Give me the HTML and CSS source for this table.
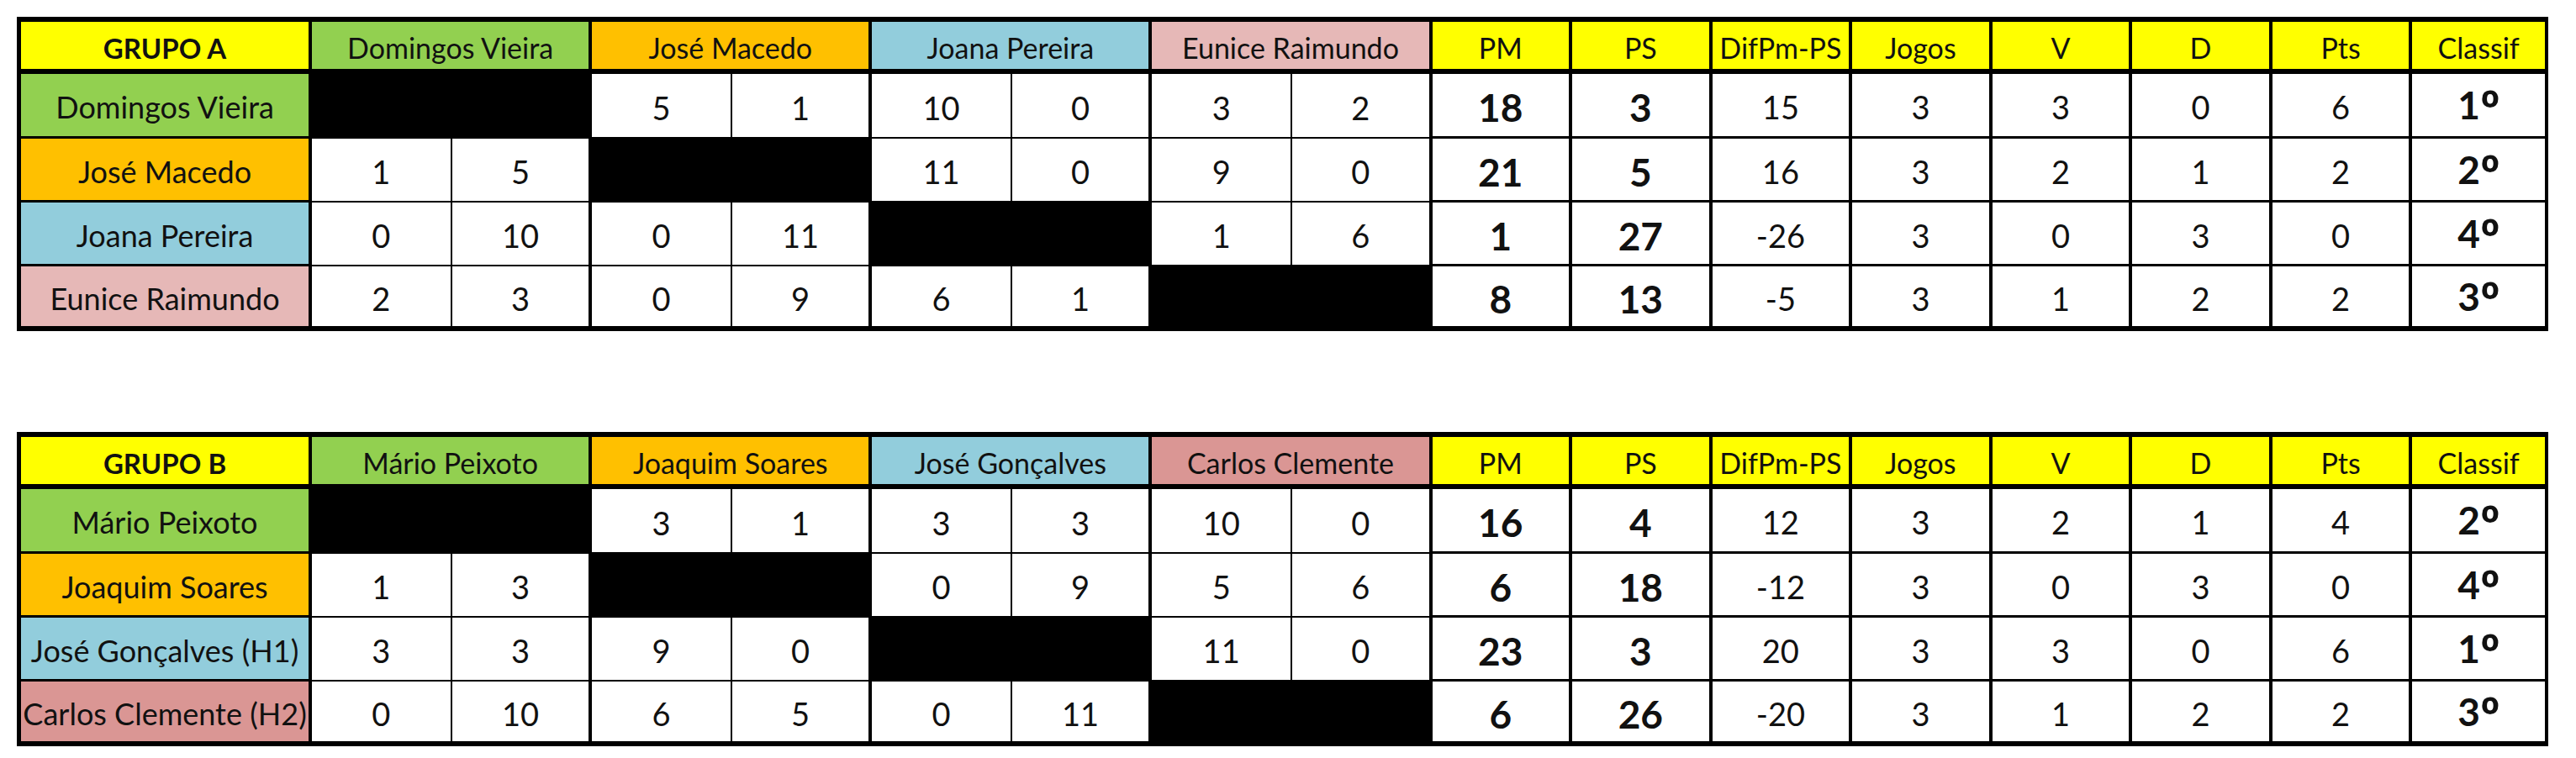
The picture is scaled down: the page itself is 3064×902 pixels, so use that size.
FILE: index.html
```html
<!DOCTYPE html>
<html lang="pt">
<head>
<meta charset="utf-8">
<title>Grupos</title>
<link rel="stylesheet" href="styles.css">
</head>
<body>
<main class="page">
  <table class="grp">
    <colgroup>
      <col class="c-name">
      <col class="c-std" span="15">
      <col class="c-last">
    </colgroup>
    <thead>
      <tr class="hd">
        <th class="yellow title">GRUPO A</th>
        <th colspan="2" class="green">Domingos Vieira</th>
        <th colspan="2" class="orange">José Macedo</th>
        <th colspan="2" class="blue">Joana Pereira</th>
        <th colspan="2" class="pink">Eunice Raimundo</th>
        <th class="yellow">PM</th>
        <th class="yellow">PS</th>
        <th class="yellow">DifPm-PS</th>
        <th class="yellow">Jogos</th>
        <th class="yellow">V</th>
        <th class="yellow">D</th>
        <th class="yellow">Pts</th>
        <th class="yellow">Classif</th>
      </tr>
    </thead>
    <tbody>
      <tr>
        <th class="name green">Domingos Vieira</th>
        <td colspan="2" class="x"></td>
        <td class="sc s1">5</td><td class="sc">1</td>
        <td class="sc s1">10</td><td class="sc">0</td>
        <td class="sc s1">3</td><td class="sc">2</td>
        <td class="big">18</td><td class="big">3</td>
        <td>15</td><td>3</td><td>3</td><td>0</td><td>6</td>
        <td class="big">1<span class="ord">º</span></td>
      </tr>
      <tr>
        <th class="name orange">José Macedo</th>
        <td class="sc s1">1</td><td class="sc">5</td>
        <td colspan="2" class="x"></td>
        <td class="sc s1">11</td><td class="sc">0</td>
        <td class="sc s1">9</td><td class="sc">0</td>
        <td class="big">21</td><td class="big">5</td>
        <td>16</td><td>3</td><td>2</td><td>1</td><td>2</td>
        <td class="big">2<span class="ord">º</span></td>
      </tr>
      <tr>
        <th class="name blue">Joana Pereira</th>
        <td class="sc s1">0</td><td class="sc">10</td>
        <td class="sc s1">0</td><td class="sc">11</td>
        <td colspan="2" class="x"></td>
        <td class="sc s1">1</td><td class="sc">6</td>
        <td class="big">1</td><td class="big">27</td>
        <td>-26</td><td>3</td><td>0</td><td>3</td><td>0</td>
        <td class="big">4<span class="ord">º</span></td>
      </tr>
      <tr>
        <th class="name pink">Eunice Raimundo</th>
        <td class="sc s1">2</td><td class="sc">3</td>
        <td class="sc s1">0</td><td class="sc">9</td>
        <td class="sc s1">6</td><td class="sc">1</td>
        <td colspan="2" class="x"></td>
        <td class="big">8</td><td class="big">13</td>
        <td>-5</td><td>3</td><td>1</td><td>2</td><td>2</td>
        <td class="big">3<span class="ord">º</span></td>
      </tr>
    </tbody>
  </table>

  <table class="grp">
    <colgroup>
      <col class="c-name">
      <col class="c-std" span="15">
      <col class="c-last">
    </colgroup>
    <thead>
      <tr class="hd">
        <th class="yellow title">GRUPO B</th>
        <th colspan="2" class="green">Mário Peixoto</th>
        <th colspan="2" class="orange">Joaquim Soares</th>
        <th colspan="2" class="blue">José Gonçalves</th>
        <th colspan="2" class="rose">Carlos Clemente</th>
        <th class="yellow">PM</th>
        <th class="yellow">PS</th>
        <th class="yellow">DifPm-PS</th>
        <th class="yellow">Jogos</th>
        <th class="yellow">V</th>
        <th class="yellow">D</th>
        <th class="yellow">Pts</th>
        <th class="yellow">Classif</th>
      </tr>
    </thead>
    <tbody>
      <tr>
        <th class="name green">Mário Peixoto</th>
        <td colspan="2" class="x"></td>
        <td class="sc s1">3</td><td class="sc">1</td>
        <td class="sc s1">3</td><td class="sc">3</td>
        <td class="sc s1">10</td><td class="sc">0</td>
        <td class="big">16</td><td class="big">4</td>
        <td>12</td><td>3</td><td>2</td><td>1</td><td>4</td>
        <td class="big">2<span class="ord">º</span></td>
      </tr>
      <tr>
        <th class="name orange">Joaquim Soares</th>
        <td class="sc s1">1</td><td class="sc">3</td>
        <td colspan="2" class="x"></td>
        <td class="sc s1">0</td><td class="sc">9</td>
        <td class="sc s1">5</td><td class="sc">6</td>
        <td class="big">6</td><td class="big">18</td>
        <td>-12</td><td>3</td><td>0</td><td>3</td><td>0</td>
        <td class="big">4<span class="ord">º</span></td>
      </tr>
      <tr>
        <th class="name blue">José Gonçalves (H1)</th>
        <td class="sc s1">3</td><td class="sc">3</td>
        <td class="sc s1">9</td><td class="sc">0</td>
        <td colspan="2" class="x"></td>
        <td class="sc s1">11</td><td class="sc">0</td>
        <td class="big">23</td><td class="big">3</td>
        <td>20</td><td>3</td><td>3</td><td>0</td><td>6</td>
        <td class="big">1<span class="ord">º</span></td>
      </tr>
      <tr>
        <th class="name rose">Carlos Clemente (H2)</th>
        <td class="sc s1">0</td><td class="sc">10</td>
        <td class="sc s1">6</td><td class="sc">5</td>
        <td class="sc s1">0</td><td class="sc">11</td>
        <td colspan="2" class="x"></td>
        <td class="big">6</td><td class="big">26</td>
        <td>-20</td><td>3</td><td>1</td><td>2</td><td>2</td>
        <td class="big">3<span class="ord">º</span></td>
      </tr>
    </tbody>
  </table>
</main>
</body>
</html>
```

FILE: styles.css
```css
html, body {
  margin: 0;
  padding: 0;
  background: #ffffff;
}

.page {
  padding: 20px 0 0 20px;
  display: flex;
  flex-direction: column;
  gap: 120px;
  font-family: "Lato", "Open Sans", sans-serif;
  color: #111;
}

.grp {
  box-sizing: border-box;
  table-layout: fixed;
  border-collapse: separate;
  border-spacing: 0;
  width: 3011px;
  border-style: solid;
  border-color: #000;
  border-width: 6px 4px 6px 5px;
}

.c-name { width: 346px; }
.c-std { width: 166.5px; }
.c-last { width: 157.5px; }

.grp th,
.grp td {
  box-sizing: border-box;
  padding: 4px 0 0 0;
  text-align: center;
  vertical-align: middle;
  white-space: nowrap;
  border-right: 4px solid #000;
  border-bottom: 3px solid #000;
  background: #fff;
  font-size: 38px;
  font-weight: 400;
  line-height: 1;
}

.grp tr > :last-child { border-right: 0; }
.grp tbody tr:last-child > * { border-bottom: 0; }

.grp .s1 { border-right-width: 2px; }
.grp .sc { border-bottom-width: 2px; }

.hd { height: 62px; }
.hd th {
  border-bottom-width: 6px;
  font-size: 34px;
  padding-top: 6px;
}
.hd th.title { font-weight: 700; font-size: 33px; }

.grp tbody tr { height: 76px; }
.grp tbody tr:first-child { height: 77px; }
.grp tbody tr:last-child { height: 71px; }

.grp .name { font-size: 36px; padding-top: 4px; }

.grp .big { font-weight: 700; font-size: 46px; padding-top: 6px; }

.ord {
  font-family: "Open Sans", "Noto Sans", sans-serif;
  font-weight: 700;
  font-size: 1.25em;
  vertical-align: -0.12em;
  margin-left: 1px;
}

.grp .x { background: #000; }

.yellow { background: #ffff00 !important; }
.green { background: #92d050 !important; }
.orange { background: #ffc000 !important; }
.blue { background: #92cddc !important; }
.pink { background: #e6b8b7 !important; }
.rose { background: #da9694 !important; }
```
